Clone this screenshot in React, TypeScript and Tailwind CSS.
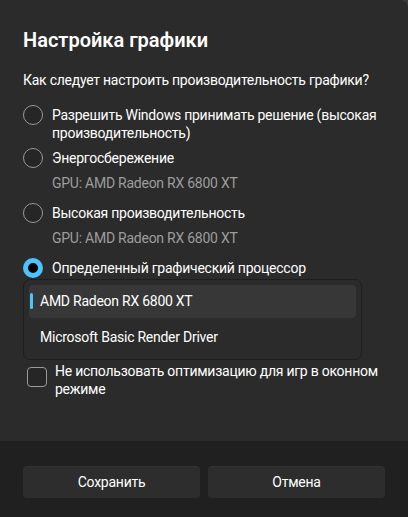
import React from 'react';

const font = { fontFamily: 'Roboto, "Noto Sans", sans-serif' };

function Radio({ checked = false }: { checked?: boolean }) {
  if (checked) {
    return <span className="block h-5 w-5 shrink-0 rounded-full border-[5px] border-[#4cc2ff] bg-black" />;
  }
  return <span className="block h-5 w-5 shrink-0 rounded-full border border-[#9a9a9a] bg-[#262626]" />;
}

export default function App() {
  const gpus = ['AMD Radeon RX 6800 XT', 'Microsoft Basic Render Driver'];

  return (
    <div className="h-[517px] w-[408px] bg-[#3a3a3a]" style={font}>
      <div className="flex h-full flex-col overflow-hidden rounded-tr-[8px] bg-[#2b2b2b] text-[14px] tracking-[-0.25px] text-white">
        <div className="flex flex-1 flex-col pl-[23px] pr-[20px] pt-[26px]">
          <h1 className="text-[20px] font-semibold leading-[28px] tracking-normal">Настройка графики</h1>
          <p className="mt-[16px] leading-[20px]">
            Как следует настроить производительность графики?
          </p>

          {/* варианты */}
          <div className="mt-[16px] flex items-start gap-[9px]">
            <div className="-mt-px"><Radio /></div>
            <span className="leading-[18px]">
              Разрешить Windows принимать решение (высокая производительность)
            </span>
          </div>

          <div className="mt-[6px] flex items-center gap-[9px]">
            <Radio />
            <span className="leading-[20px]">Энергосбережение</span>
          </div>
          <div className="mt-[5px] pl-[29px] leading-[20px] text-[#9d9d9d]">
            GPU: AMD Radeon RX 6800 XT
          </div>

          <div className="mt-[10px] flex items-center gap-[9px]">
            <Radio />
            <span className="leading-[20px]">Высокая производительность</span>
          </div>
          <div className="mt-[5px] pl-[29px] leading-[20px] text-[#9d9d9d]">
            GPU: AMD Radeon RX 6800 XT
          </div>

          <div className="mt-[10px] flex items-center gap-[9px]">
            <Radio checked />
            <span className="leading-[20px]">Определенный графический процессор</span>
          </div>

          {/* список GPU */}
          <div className="mt-px flex w-[339px] flex-col gap-[3px] rounded-[7px] border border-[#1e1e1e] bg-[#2b2b2b] p-[5px]">
            {gpus.map((g, i) => (
              <div
                key={g}
                className={`relative flex h-[33px] items-center rounded-[4px] pl-[11px] ${
                  i === 0 ? 'bg-[#373737]' : ''
                }`}
              >
                {i === 0 && (
                  <span className="absolute left-px top-[8px] h-[16px] w-[3px] rounded-full bg-[#4cc2ff]" />
                )}
                {g}
              </div>
            ))}
          </div>

          <div className="mt-[2px] flex items-start gap-[8px] pl-[4px]">
            <span className="mt-[5px] block h-5 w-5 shrink-0 rounded-[4px] border border-[#9a9a9a] bg-[#262626]" />
            <span className="leading-[18px]">
              Не использовать оптимизацию для игр в оконном режиме
            </span>
          </div>
        </div>

        <div className="flex h-[76px] gap-[8px] bg-[#202020] px-[23px] pt-[25px]">
          <button className="h-[32px] flex-1 rounded-[4px] border-t border-[#333333] bg-[#2d2d2d] text-white">
            Сохранить
          </button>
          <button className="h-[32px] flex-1 rounded-[4px] border-t border-[#333333] bg-[#2d2d2d] text-white">
            Отмена
          </button>
        </div>
      </div>
    </div>
  );
}
